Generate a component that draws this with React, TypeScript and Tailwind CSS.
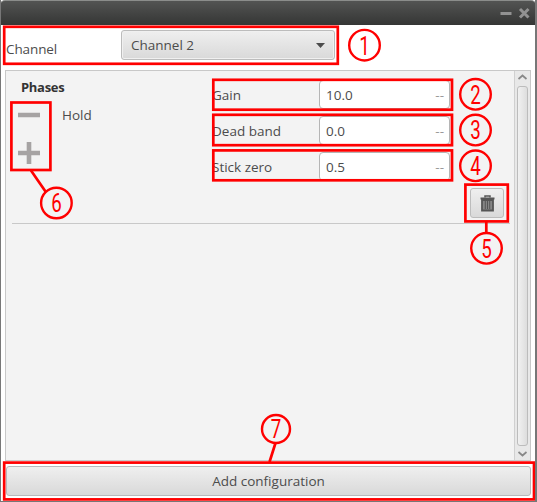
import React from "react";

const fields = [
  { label: "Gain", value: "10.0" },
  { label: "Dead band", value: "0.0" },
  { label: "Stick zero", value: "0.5" },
];

const boxes = [
  { x: 3.2, y: 26.8, w: 333.6, h: 37 },
  { x: 212.3, y: 79.8, w: 238.7, h: 29.9 },
  { x: 212.3, y: 114.8, w: 238.7, h: 30.4 },
  { x: 212.3, y: 150.4, w: 238.7, h: 29.9 },
  { x: 464.4, y: 184.6, w: 42.4, h: 36.8 },
  { x: 10.4, y: 102.5, w: 39, h: 67.5 },
  { x: 3.2, y: 462.6, w: 529.8, h: 36.8 },
];

const marks = [
  { n: "1", x: 363.5, y: 45.2, r: 15.3 },
  { n: "2", x: 474.5, y: 94.3, r: 15.3 },
  { n: "3", x: 474.5, y: 130.1, r: 15.3 },
  { n: "4", x: 474.5, y: 165.8, r: 15.3 },
  { n: "5", x: 485.5, y: 248.3, r: 15.3 },
  { n: "6", x: 55.4, y: 203, r: 15.3 },
  { n: "7", x: 275, y: 429, r: 14 },
];

function Annotations() {
  return (
    <svg className="pointer-events-none absolute inset-0" width="537" height="502" fill="none" stroke="#ff0000" strokeWidth="2.7">
      {boxes.map((b, i) => (
        <rect key={i} x={b.x} y={b.y} width={b.w} height={b.h} />
      ))}
      <path d="M30 170.500L44.500 191.500M485.300 222V233M274.500 443L268.500 462" />
      {marks.map((m) => (
        <g key={m.n}>
          <circle cx={m.x} cy={m.y} r={m.r} strokeWidth="2.4" />
          <text
            transform={`translate(${m.x} ${m.y + 9.3}) scale(0.72 1)`}
            textAnchor="middle"
            fill="#ff0000"
            stroke="none"
            className="font-['Roboto',sans-serif] text-[26px]"
          >
            {m.n}
          </text>
        </g>
      ))}
    </svg>
  );
}

export default function App() {
  return (
    <div className="relative flex h-[502px] w-[537px] flex-col overflow-hidden border-l border-r-2 border-b border-[#777777] bg-white font-['Open_Sans','Noto_Sans',sans-serif] text-[13.5px] leading-5 text-[#4c4c4c]">
      <header className="-mx-px flex h-[25px] shrink-0 items-center justify-end gap-2 rounded-t-[5px] border-t border-[#8b8d8b] bg-linear-to-b from-[#535453] to-[#353635] pr-[6px]">
        <svg width="30" height="12" stroke="#929292" strokeWidth="3">
          <path d="M0.500 6.500H11.500M20 2L28.500 10.500M28.500 2L20 10.500" />
        </svg>
      </header>

      <div className="flex h-[45px] shrink-0 pl-[5px]">
        <span className="w-[115px] pt-[14px] tracking-[-0.1px]">Channel</span>
        <button className="mt-[5px] flex h-[30px] w-[214px] items-center justify-between rounded-[3px] border border-[#bcbcbc] bg-linear-to-b from-[#efefef] to-[#d9d9d9] pr-[9px] pl-[9px] shadow-[inset_0_0_0_1px_#f0f0f0]">
          <span>Channel 2</span>
          <svg width="9" height="5" fill="#4c4c4c">
            <path d="M0 0H9L4.500 5Z" />
          </svg>
        </button>
      </div>

      <main className="ml-1 flex h-[391px] w-[526px] shrink-0 border border-[#c8c8c8] bg-[#f3f3f3]">
        <div className="flex min-w-0 flex-1 flex-col pl-[6px]">
          <section className="flex h-[153px] w-[498px] shrink-0 border-b border-[#c8c8c8]">
            <div className="w-[200px] pt-[6px] pl-[6px]">
              <h2 className="pl-[3px] text-[13px] font-bold tracking-[-0.3px] text-[#333333]">Phases</h2>
              <div className="flex gap-[22px] pt-[8px]">
                <svg width="22" height="60" stroke="#a6a3a3" strokeWidth="4.6">
                  <path d="M0 10H22M0 48H22M11 37V59" />
                </svg>
                <span>Hold</span>
              </div>
            </div>
            <div className="flex-1 pt-[9px]">
              {fields.map((f) => (
                <div key={f.label} className="mb-[7px] flex h-[29px] items-center">
                  <label className="w-[107px]">{f.label}</label>
                  <div className="flex h-[29px] w-[131px] items-center justify-between rounded-[4px] border border-[#b5b5b5] bg-white pr-[5px] pl-[6px]">
                    <span>{f.value}</span>
                    <span className="text-[#999999]">--</span>
                  </div>
                </div>
              ))}
              <div className="flex justify-end pr-[6px]">
                <button className="flex h-[30px] w-[34px] items-center justify-center rounded-[3px] border border-[#bcbcbc] bg-linear-to-b from-[#efefef] to-[#d9d9d9]">
                  <svg width="15" height="17" fill="none" stroke="#555555">
                    <path d="M5 2.500V1H10V2.500" strokeWidth="1.500" />
                    <path d="M0.500 3.500H14.500" strokeWidth="2" />
                    <path d="M2 5H13V15.500H2Z" fill="#858585" strokeWidth="1.800" />
                    <path d="M5.300 6V14M7.500 6V14M9.700 6V14" strokeWidth="1" />
                  </svg>
                </button>
              </div>
            </div>
          </section>
        </div>
        <aside className="flex w-[16px] shrink-0 flex-col items-center border-l border-[#d0d0d0] bg-[#e8e8e8]">
          <svg className="shrink-0" width="11" height="15" fill="none" stroke="#888888" strokeWidth="1.700">
            <path d="M1.500 8L5.500 4.500L9.500 8" />
          </svg>
          <div className="h-[360px] w-[11px] shrink-0 rounded-[3px] border border-[#bcbcbc] bg-linear-to-r from-[#f1f1f1] to-[#dddddd]" />
          <svg className="shrink-0" width="11" height="14" fill="none" stroke="#888888" strokeWidth="1.700">
            <path d="M1.500 6L5.500 9.500L9.500 6" />
          </svg>
        </aside>
      </main>

      <footer className="px-[5px] pt-[5px]">
        <button className="h-[30px] w-[525px] rounded-[3px] border border-[#b8babc] bg-linear-to-b from-[#efefef] to-[#d9d9d9]">
          Add configuration
        </button>
      </footer>

      <Annotations />
    </div>
  );
}
